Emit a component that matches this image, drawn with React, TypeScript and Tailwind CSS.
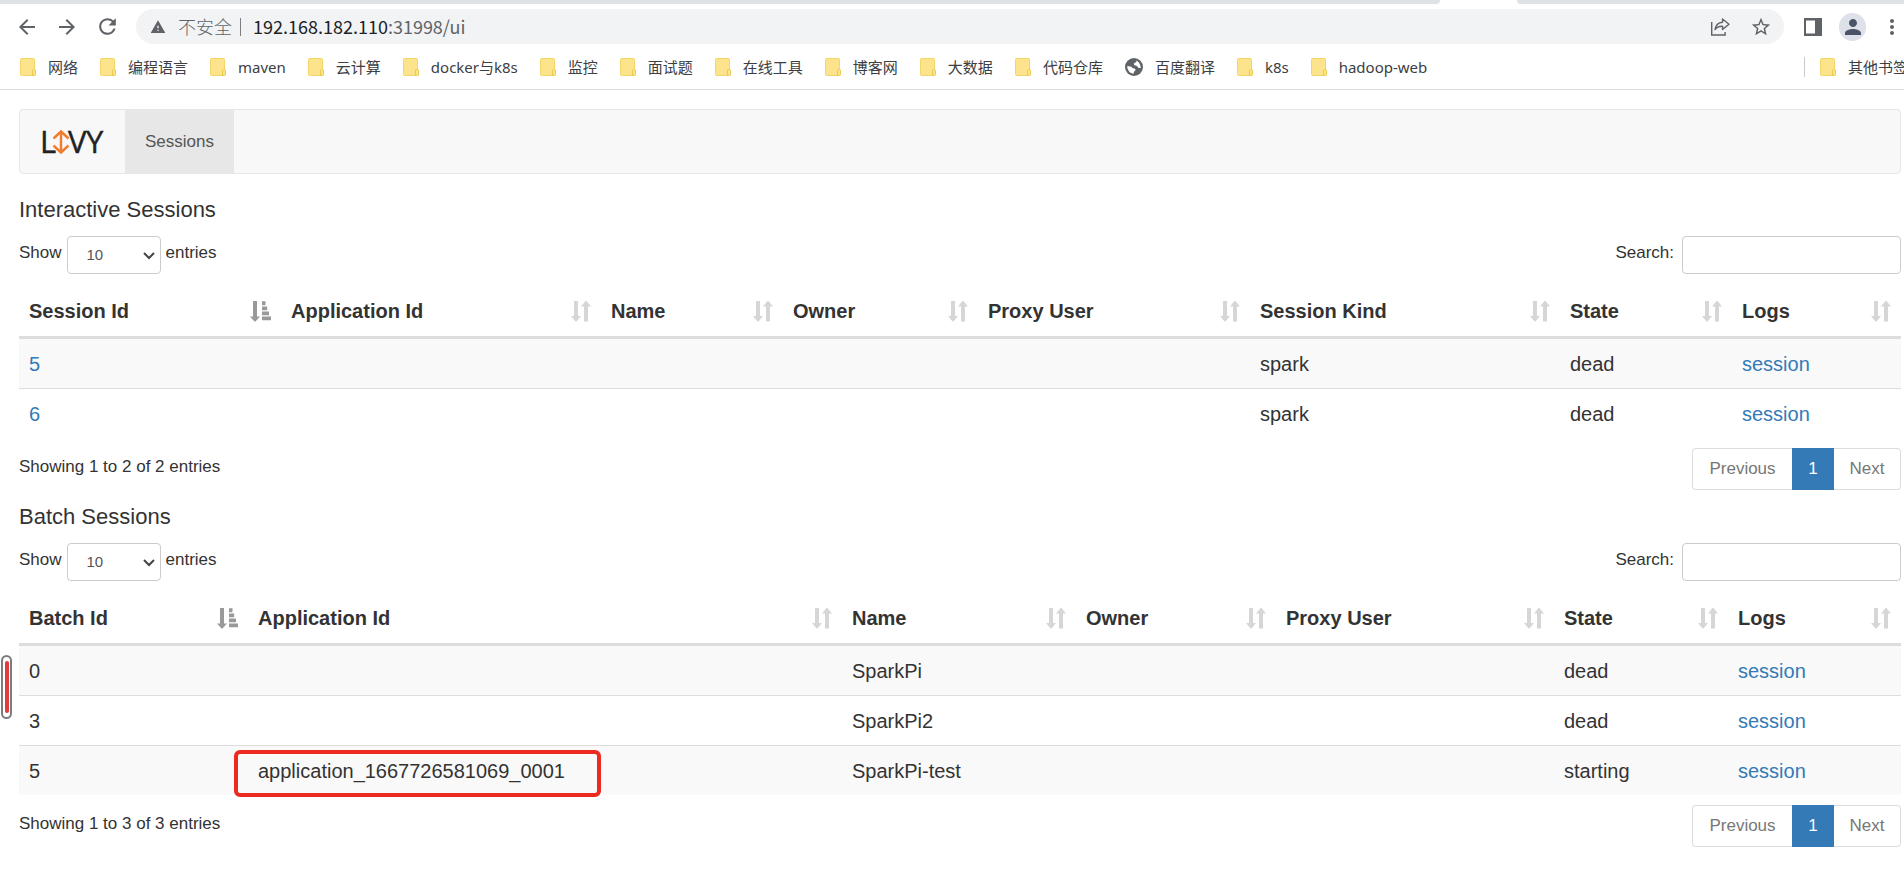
import React from "react";
import {
  MdArrowBack,
  MdArrowForward,
  MdMoreVert,
  MdPerson,
  MdRefresh,
  MdStarBorder,
  MdWarning,
} from "react-icons/md";

type Cell = { text: string; link?: boolean; marked?: boolean };
type Column = { label: string; width: string };

const bookmarks = [
  "网络",
  "编程语言",
  "maven",
  "云计算",
  "docker与k8s",
  "监控",
  "面试题",
  "在线工具",
  "博客网",
  "大数据",
  "代码仓库",
  "百度翻译",
  "k8s",
  "hadoop-web",
];

const empty: Cell = { text: "" };
const sessionLink: Cell = { text: "session", link: true };

const interactiveColumns: Column[] = [
  { label: "Session Id", width: "w-[262px]" },
  { label: "Application Id", width: "w-[320px]" },
  { label: "Name", width: "w-[182px]" },
  { label: "Owner", width: "w-[195px]" },
  { label: "Proxy User", width: "w-[272px]" },
  { label: "Session Kind", width: "w-[310px]" },
  { label: "State", width: "w-[172px]" },
  { label: "Logs", width: "w-[169px]" },
];

const interactiveRows: Cell[][] = [
  [{ text: "5", link: true }, empty, empty, empty, empty, { text: "spark" }, { text: "dead" }, sessionLink],
  [{ text: "6", link: true }, empty, empty, empty, empty, { text: "spark" }, { text: "dead" }, sessionLink],
];

const batchColumns: Column[] = [
  { label: "Batch Id", width: "w-[229px]" },
  { label: "Application Id", width: "w-[594px]" },
  { label: "Name", width: "w-[234px]" },
  { label: "Owner", width: "w-[200px]" },
  { label: "Proxy User", width: "w-[278px]" },
  { label: "State", width: "w-[174px]" },
  { label: "Logs", width: "w-[173px]" },
];

const batchRows: Cell[][] = [
  [{ text: "0" }, empty, { text: "SparkPi" }, empty, empty, { text: "dead" }, sessionLink],
  [{ text: "3" }, empty, { text: "SparkPi2" }, empty, empty, { text: "dead" }, sessionLink],
  [
    { text: "5" },
    { text: "application_1667726581069_0001", marked: true },
    { text: "SparkPi-test" },
    empty,
    empty,
    { text: "starting" },
    sessionLink,
  ],
];

function FolderIcon() {
  return (
    <svg viewBox="0 0 16 18" className="h-[18px] w-4 shrink-0" aria-hidden="true">
      <rect x="0.5" y="0.5" width="14" height="17" rx="1" fill="#fde48c" stroke="#f3d568" />
      <path d="M12.5 12.5q0-1 1-1h1q1 0 1 1v4q0 1-1 1h-2z" fill="#fde48c" stroke="#ebc94c" />
    </svg>
  );
}

function GlobeIcon() {
  return (
    <svg viewBox="0 0 18 18" className="h-[18px] w-[18px] shrink-0" aria-hidden="true">
      <circle cx="9" cy="9" r="9" fill="#5f6368" />
      <path
        d="M11 2.200q1.500 1.300-.5 2.200-1.800.3-1.600 1.800.2 1.300 1.800 1.300 1.700 0 1.900 1.500.6 1.200 3.300.800Q15.300 4.500 11 2.200z"
        fill="#ffffff"
      />
      <path
        d="M2 8.300q3.300-.5 4.600.700 1 1.500 2.800 1.500 1.800.4.900 2-1.600.800-1.800 3.300Q3 15.300 2 8.300z"
        fill="#ffffff"
      />
    </svg>
  );
}

function ShareIcon() {
  return (
    <svg viewBox="0 0 20 20" className="h-5 w-5" fill="none" stroke="#5f6368" strokeWidth="1.4" aria-hidden="true">
      <path d="M1.700 5v13h13.400v-3" />
      <path
        d="M12.500 2l6.500 5.200-6.500 5.200V9.200C9.400 9 6.900 10 5 12.600c.6-4.200 3-7 7.500-7.400z"
        strokeLinejoin="round"
      />
    </svg>
  );
}

function SidePanelIcon() {
  return (
    <svg viewBox="0 0 18 18" className="h-[18px] w-[18px]" aria-hidden="true">
      <path fillRule="evenodd" d="M0 0h18v18H0zM2 2.500v13h9v-13z" fill="#5f6368" />
    </svg>
  );
}

function SortIcon({ active }: { active: boolean }) {
  return active ? (
    <svg viewBox="0 0 21 21" className="h-[21px] w-[21px] shrink-0 fill-[#999999]" aria-hidden="true">
      <path d="M3 0h4v15.500h3L5.500 20.500h-1L0 15.500h3z" />
      <path d="M12 0.300h3.500v4H12zM12 5.500h5.200v3.800H12zM12 10.500h7v3.800H12zM12 15.500h9v3.800h-9z" />
    </svg>
  ) : (
    <svg viewBox="0 0 20 21" className="h-[21px] w-5 shrink-0 fill-[#d6d6d6]" aria-hidden="true">
      <path d="M3 0h4v15h3L5.500 20.500h-1L0 15h3z" />
      <path d="M13 20.500h4v-15h3L15.500 0h-1L10 5.500h3z" />
    </svg>
  );
}

function LivyLogo() {
  return (
    <svg viewBox="0 0 66 50" className="h-[50px] w-[66px]" role="img" aria-label="Livy">
      <g
        fill="#222222"
        stroke="#222222"
        strokeWidth="0.4"
        fontFamily="'Open Sans', sans-serif"
        fontSize="31"
      >
        <text x="0" y="36">L</text>
        <text x="28" y="36">V</text>
        <text x="46" y="36">Y</text>
      </g>
      <path
        d="M21 15v20M13.500 21.500l7.500-7 7.500 7M13.500 28.500l7.500 7 7.500-7"
        fill="none"
        stroke="#f07c2f"
        strokeWidth="2.400"
      />
    </svg>
  );
}

function TabStrip() {
  return (
    <div className="flex h-1 bg-white">
      <div className="flex-1 rounded-br-lg bg-[#dee1e6]" />
      <div className="w-[77px]" />
      <div className="w-[387px] rounded-bl-lg bg-[#dee1e6]" />
    </div>
  );
}

function Toolbar() {
  return (
    <div className="flex h-[45px] items-center pl-[7px] text-[#5f6368]">
      <div className="flex w-[129px] items-center">
        <button type="button" aria-label="Back" className="flex w-10 justify-center">
          <MdArrowBack size={24} />
        </button>
        <button type="button" aria-label="Forward" className="flex w-10 justify-center">
          <MdArrowForward size={24} />
        </button>
        <button type="button" aria-label="Reload" className="flex w-10 justify-center">
          <MdRefresh size={25} />
        </button>
      </div>
      <div className="flex h-[35px] flex-1 items-center rounded-full bg-[#f1f3f4] pr-3 pl-3.5 font-['Noto_Sans_CJK_SC',sans-serif] text-lg leading-6">
        <MdWarning size={16} className="shrink-0" />
        <span className="ml-3 pb-0.5 font-light">不安全</span>
        <span className="mr-3 ml-2 h-[18px] w-px bg-[#7a7d81]" />
        <span className="flex-1 pb-0.5">
          <span className="text-[#202124]">192.168.182.110</span>:31998/ui
        </span>
        <button type="button" aria-label="Share" className="mr-5">
          <ShareIcon />
        </button>
        <button type="button" aria-label="Bookmark this page">
          <MdStarBorder size={22} />
        </button>
      </div>
      <div className="flex w-[120px] items-center pl-5">
        <button type="button" aria-label="Side panel">
          <SidePanelIcon />
        </button>
        <button
          type="button"
          aria-label="Profile"
          className="ml-[17px] flex h-7 w-7 items-center justify-center rounded-full bg-[#dee1e9] text-[#4a5468]"
        >
          <MdPerson size={24} />
        </button>
        <button type="button" aria-label="Menu" className="ml-3.5">
          <MdMoreVert size={24} />
        </button>
      </div>
    </div>
  );
}

function BookmarksBar() {
  return (
    <nav className="flex h-[41px] items-center overflow-hidden border-b border-[#dadce0] pb-1 pl-5 font-['Noto_Sans','Noto_Sans_CJK_SC',sans-serif] text-[15px] leading-5 whitespace-nowrap text-[#3c4043]">
      <div className="flex flex-1 items-center gap-[22px] overflow-hidden">
        {bookmarks.map((name) => (
          <a key={name} href="#" className="flex items-center gap-3">
            {name === "百度翻译" ? <GlobeIcon /> : <FolderIcon />}
            {name}
          </a>
        ))}
      </div>
      <div className="flex w-[100px] items-center overflow-hidden">
        <span className="h-5 w-px shrink-0 bg-[#c8cacd]" />
        <a href="#" className="ml-[15px] flex items-center gap-3">
          <FolderIcon />
          其他书签
        </a>
      </div>
    </nav>
  );
}

function SessionTable({
  id,
  title,
  columns,
  rows,
}: {
  id: string;
  title: string;
  columns: Column[];
  rows: Cell[][];
}) {
  return (
    <section>
      <h4 className="mb-3 text-[22px] leading-7">{title}</h4>
      <div className="flex h-[38px] justify-between text-[17px] leading-[34px]">
        <div className="flex items-start gap-[5px]">
          <label htmlFor={`${id}-length`}>Show</label>
          <span className="relative block">
            <select
              id={`${id}-length`}
              defaultValue="10"
              className="block h-[38px] w-[94px] appearance-none rounded border border-[#cccccc] bg-white pr-8 pl-[19px] text-[15px] text-[#555555]"
            >
              <option>10</option>
              <option>25</option>
              <option>50</option>
              <option>100</option>
            </select>
            <svg
              viewBox="0 0 12 8"
              className="pointer-events-none absolute top-4 right-1.5 h-2 w-3"
              fill="none"
              stroke="#444444"
              strokeWidth="2"
              aria-hidden="true"
            >
              <path d="M1 1l5 5 5-5" />
            </svg>
          </span>
          <label htmlFor={`${id}-length`}>entries</label>
        </div>
        <div className="flex items-start gap-2">
          <label htmlFor={`${id}-search`}>Search:</label>
          <input
            id={`${id}-search`}
            type="search"
            className="h-[38px] w-[219px] rounded border border-[#cccccc] bg-white px-3 text-[15px]"
          />
        </div>
      </div>

      <table className="mt-3 w-full table-fixed border-separate border-spacing-0 text-left text-xl">
        <thead>
          <tr>
            {columns.map((column, index) => (
              <th
                key={column.label}
                scope="col"
                className={`h-[53px] border-b-3 border-[#dddddd] px-2.5 font-bold ${column.width}`}
              >
                <div className="flex items-center justify-between">
                  {column.label}
                  <SortIcon active={index === 0} />
                </div>
              </th>
            ))}
          </tr>
        </thead>
        <tbody>
          {rows.map((row, rowIndex) => (
            <tr key={rowIndex} className="odd:bg-[#f9f9f9]">
              {row.map((cell, cellIndex) => (
                <td
                  key={cellIndex}
                  className={rowIndex === 0 ? "h-[49px] px-2.5" : "h-[50px] border-t border-[#dddddd] px-2.5"}
                >
                  {cell.link ? (
                    <a href="#" className="text-[#337ab7]">
                      {cell.text}
                    </a>
                  ) : cell.marked ? (
                    <span className="relative">
                      {cell.text}
                      <span className="absolute -top-2.5 -left-6 h-[47px] w-[367px] rounded-md border-4 border-[#eb2a20]" />
                    </span>
                  ) : (
                    cell.text
                  )}
                </td>
              ))}
            </tr>
          ))}
        </tbody>
      </table>

      <div className="mt-2.5 flex h-[42px] items-start justify-between text-[17px]">
        <p className="leading-[38px]">
          Showing 1 to {rows.length} of {rows.length} entries
        </p>
        <div className="flex h-[42px] text-[#777777]">
          <button type="button" className="w-[100px] rounded-l border border-r-0 border-[#dddddd]">
            Previous
          </button>
          <button type="button" className="w-[42px] bg-[#337ab7] text-white">
            1
          </button>
          <button type="button" className="w-[67px] rounded-r border border-l-0 border-[#dddddd]">
            Next
          </button>
        </div>
      </div>
    </section>
  );
}

export default function App() {
  return (
    <div className="relative min-h-screen overflow-hidden bg-white font-['Liberation_Sans',Arial,sans-serif] text-[#333333]">
      <TabStrip />
      <Toolbar />
      <BookmarksBar />
      <main className="pt-[19px] pr-[3px] pl-[19px]">
        <nav className="flex h-[65px] items-stretch rounded border border-[#e7e7e7] bg-[#f8f8f8] text-[17px]">
          <a href="#" className="flex w-[105px] items-center pl-5">
            <LivyLogo />
          </a>
          <a href="#" className="flex w-[109px] items-center justify-center bg-[#e7e7e7] text-[#555555]">
            Sessions
          </a>
        </nav>
        <div className="mt-[22px] flex flex-col gap-[13px]">
          <SessionTable
            id="interactive"
            title="Interactive Sessions"
            columns={interactiveColumns}
            rows={interactiveRows}
          />
          <SessionTable id="batch" title="Batch Sessions" columns={batchColumns} rows={batchRows} />
        </div>
      </main>
      <div className="absolute top-[655px] left-px flex h-16 w-[11px] justify-center rounded-full border-2 border-[#7d7d7d] bg-white py-1">
        <span className="w-1 rounded-full bg-[#e23b3b]" />
      </div>
    </div>
  );
}
